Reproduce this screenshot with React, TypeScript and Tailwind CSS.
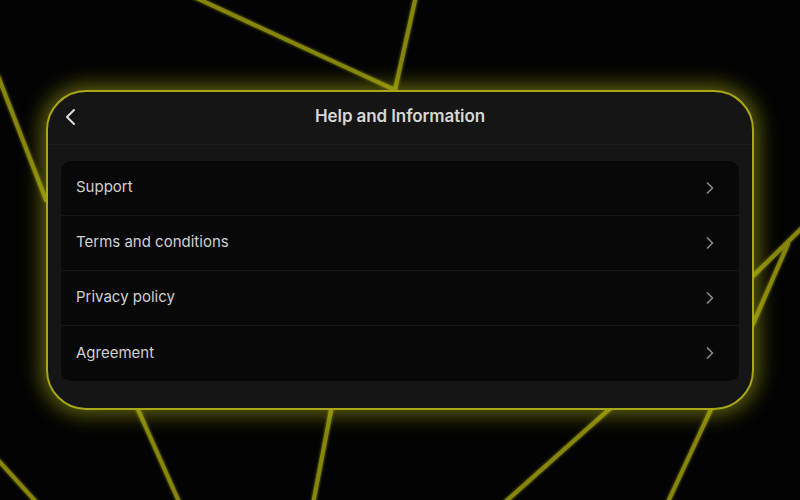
import { ChevronRight } from "lucide-react";

const ITEMS = ["Support", "Terms and conditions", "Privacy policy", "Agreement"];

// decorative lines behind the card
const LINES: [number, number, number, number][] = [
  [192, -4, 395, 90],
  [416, -4, 395, 90],
  [-2, 76, 46, 200],
  [802, 228, 753, 276],
  [788, 244, 753, 324],
  [136, 405, 180, 504],
  [332, 405, 313, 504],
  [614, 405, 503, 504],
  [713, 405, 667, 504],
  [-2, 460, 38, 504],
];

function Backdrop() {
  return (
    <svg className="absolute inset-0 w-full h-full" viewBox="0 0 800 500" preserveAspectRatio="none">
      <defs>
        <filter id="glow" x="-20%" y="-20%" width="140%" height="140%">
          <feGaussianBlur stdDeviation="1.5" result="b" />
          <feMerge>
            <feMergeNode in="b" />
            <feMergeNode in="SourceGraphic" />
          </feMerge>
        </filter>
      </defs>
      <g stroke="#868611" strokeWidth="4" strokeLinecap="round" filter="url(#glow)">
        {LINES.map(([x1, y1, x2, y2], i) => (
          <line key={i} x1={x1} y1={y1} x2={x2} y2={y2} />
        ))}
      </g>
    </svg>
  );
}

export default function App() {
  return (
    <div
      className="relative w-full h-[500px] bg-[#030303] overflow-hidden flex items-center justify-center"
      style={{ fontFamily: "Inter, 'Noto Sans', sans-serif" }}
    >
      <Backdrop />

      <div className="relative -mt-[1px] w-[708px] h-[320px] rounded-[40px] border-2 border-[#a8a816] bg-[#151515] shadow-[0_0_20px_5px_rgba(190,190,20,0.5)] flex flex-col">
        <div className="relative h-[53px] shrink-0 flex items-center justify-center pb-[2px] border-b border-[#1f1f1f]">
          <button className="absolute left-[16px] top-[16px] text-[#dcdcdc]" aria-label="Back">
            <svg width="12" height="18" viewBox="0 0 12 18" fill="none">
              <path d="M10 2 L3 9 L10 16" stroke="currentColor" strokeWidth="2" strokeLinecap="round" strokeLinejoin="round" />
            </svg>
          </button>
          <h1 className="text-[17px] font-semibold text-[#d6d6d6] tracking-[-0.1px]">Help and Information</h1>
        </div>

        <div className="px-[13px] pt-[16px]">
          <div className="rounded-[10px] bg-[#080808] overflow-hidden">
            {ITEMS.map((item, i) => (
              <div
                key={item}
                className={`h-[55px] flex items-center justify-between pl-[15px] pr-[19px] ${
                  i < ITEMS.length - 1 ? "border-b border-[#161616]" : ""
                }`}
              >
                <span className="text-[15px] text-[#d0d0d0]">{item}</span>
                <ChevronRight size={20} strokeWidth={2} className="text-[#8a8a8a]" />
              </div>
            ))}
          </div>
        </div>
      </div>
    </div>
  );
}
